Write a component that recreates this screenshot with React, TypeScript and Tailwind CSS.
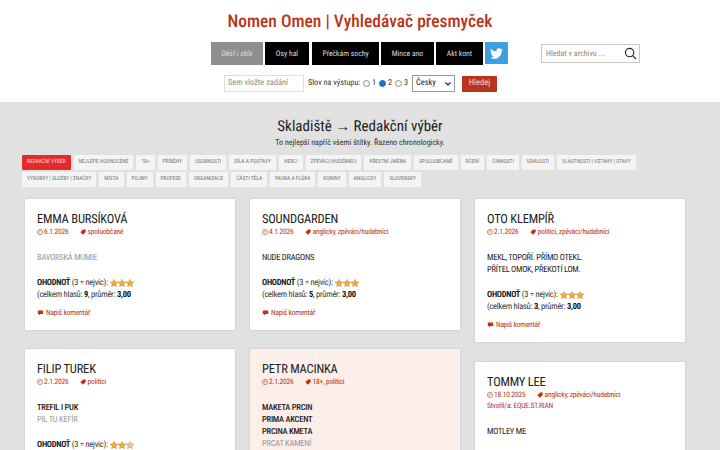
import React from "react";

const rc = "font-['Roboto_Condensed','Liberation_Sans_Narrow',Roboto,sans-serif] [font-stretch:75%] [text-rendering:geometricPrecision]";

function Stars({ half = false }: { half?: boolean }) {
  const s = "M5 0.2l1.5 3.2 3.5.4-2.6 2.4.7 3.5L5 8 1.9 9.7l.7-3.5L0 3.8l3.5-.4z";
  return (
    <span className="inline-flex align-[-1.5px] ml-[2px]">
      {[0, 1, 2].map((i) => (
        <svg key={i} width="8" height="8" viewBox="0 0 10 10" className="w-[8px] h-[8px]">
          <path d={s} fill={half && i === 2 ? "#d9c9a0" : "#f2a93b"} stroke="#b98a4a" strokeWidth="0.5" />
        </svg>
      ))}
    </span>
  );
}

function Clock() {
  return (
    <svg width="6" height="6" viewBox="0 0 10 10" className="inline-block mr-[1px] align-[-0.5px]" fill="none" stroke="#b8341a" strokeWidth="1">
      <circle cx="5" cy="5" r="4.3" />
      <path d="M5 2.5V5.2L3 5.2" />
    </svg>
  );
}

function Tag() {
  return (
    <svg width="6" height="6" viewBox="0 0 10 10" className="inline-block mr-[2px] align-[-0.5px]" fill="#b8341a">
      <path d="M5 1h4.5v4.2L5 9.6.6 5.4z" />
    </svg>
  );
}

function Comment() {
  return (
    <svg width="7" height="6" viewBox="0 0 11 10" className="inline-block mr-[2px]" fill="#b8341a">
      <path d="M1 1h9v5.6H5.4L3 9V6.6H1z" />
    </svg>
  );
}

type Line = { t: string; muted?: boolean; strong?: boolean };

function Card({
  name,
  date,
  tags,
  author,
  lines,
  votes,
  pink,
  half,
}: {
  name: string;
  date: string;
  tags: string;
  author?: string;
  lines: Line[];
  votes: number;
  pink?: boolean;
  half?: boolean;
}) {
  return (
    <div className={`${pink ? "bg-[#fdeeea]" : "bg-white"} rounded-[1px] shadow-[0_0_2px_rgba(0,0,0,0.18)] pl-[12px] pr-3 pt-[13px] pb-[12px] text-[#222]`}>
      <div className={`text-[12.5px] leading-[15px] tracking-[-0.2px] text-[#222] ${rc}`}>{name}</div>
      <div className={`text-[7.5px] leading-[10px] tracking-[-0.2px] text-[#b8341a] whitespace-nowrap ${rc}`}>
        <span className="mr-[11px]"><Clock />{date}</span>
        <span><Tag />{tags}</span>
      </div>
      {author && <div className={`text-[7.5px] leading-[11px] tracking-[-0.2px] text-[#b8341a] ${rc}`}>Stvořil/a: {author}</div>}
      <div className={`mt-[15px] text-[8.5px] leading-[12px] tracking-[-0.25px] ${rc}`}>
        {lines.map((l) => (
          <div key={l.t} className={l.muted ? "text-[#999]" : l.strong ? "text-[#222] font-medium" : "text-[#222]"}>{l.t}</div>
        ))}
      </div>
      <div className={`mt-[13px] text-[8.5px] leading-[12px] tracking-[-0.25px] ${rc}`}>
        <div><b className="font-bold">OHODNOŤ</b> <span className="text-[#333]">(3 = nejvíc):</span><Stars half={half} /></div>
        <div className="text-[#333]">(celkem hlasů: <b className="font-bold text-[#111]">{votes}</b>, průměr: <b className="font-bold text-[#111]">3,00</b></div>
      </div>
      <div className={`mt-[7px] text-[7.5px] leading-[10px] tracking-[-0.2px] text-[#b8341a] ${rc}`}><Comment />Napiš komentář</div>
    </div>
  );
}

const nav = [
  ["Osy hal", "w-[44px] mr-[3px]"],
  ["Přečkám sochy", "w-[67px] mr-[2px]"],
  ["Mince ano", "w-[53px] mr-[2px]"],
  ["Akt kont", "w-[47px] mr-[2px]"],
];

const tags1 = ["NEJLÉPE HODNOCENÉ", "18+", "PŘÍBĚHY", "OSOBNOSTI", "DÍLA A POSTAVY", "HERCI", "ZPĚVÁCI/HUDEBNÍCI", "KŘESTNÍ JMÉNA", "SPOLUOBČANÉ", "RČENÍ", "ČINNOSTI", "UDÁLOSTI", "VLASTNOSTI | VZTAHY | STAVY"];
const tags2 = ["VÝROBKY | SLUŽBY | ZNAČKY", "MÍSTA", "POJMY", "PROFESE", "ORGANIZACE", "ČÁSTI TĚLA", "FAUNA A FLÓRA", "KONINY", "ANGLICKY", "SLOVENSKY"];

function Chip({ t, active }: { t: string; active?: boolean }) {
  return (
    <span className={`h-[15px] px-[5px] flex items-center text-[5.5px] rounded-[1px] whitespace-nowrap ${rc} ${active ? "bg-[#e32b2b] text-[#f6d8d0]" : "bg-[#f4f4f4] text-[#777]"}`}>{t}</span>
  );
}

export default function App() {
  return (
    <div className={`w-[720px] h-[450px] overflow-hidden bg-[#e1e1e1] ${rc}`}>
      <header className="bg-white h-[102px] relative">
        <h1 className="pt-[10px] text-center text-[17.5px] leading-[24px] font-medium text-[#b8341a]">Nomen Omen | Vyhledávač přesmyček</h1>
        <div className="mt-[8px] pl-[211px] flex items-start h-[23px]">
          <div className="w-[52px] h-[23px] mr-[2px] bg-[#8e8e8e] text-[#ddd] italic text-[7.7px] flex items-center justify-center">Děšť i skla</div>
          {nav.map(([t, w]) => (
            <div key={t} className={`${w} h-[23px] bg-black text-[#ddd] text-[7.7px] flex items-center justify-center`}>{t}</div>
          ))}
          <div className="w-[23px] h-[22px] bg-[#3b9fe0] flex items-center justify-center">
            <svg width="15" height="13" viewBox="0 0 24 24" fill="#fff"><path d="M23.95 4.57a10 10 0 0 1-2.82.77 4.96 4.96 0 0 0 2.16-2.72 9.9 9.9 0 0 1-3.12 1.18 4.92 4.92 0 0 0-8.38 4.48A13.98 13.98 0 0 1 1.64 3.16a4.92 4.92 0 0 0 1.52 6.57 4.9 4.9 0 0 1-2.23-.62v.06a4.92 4.92 0 0 0 3.95 4.83 5 5 0 0 1-2.22.08 4.93 4.93 0 0 0 4.6 3.42A9.87 9.87 0 0 1 0 19.54a14 14 0 0 0 7.56 2.21c9.05 0 14-7.5 14-13.98l-.02-.64a9.9 9.9 0 0 0 2.41-2.56z" /></svg>
          </div>
          <div className="ml-[33px] mt-[2px] w-[99px] h-[19px] border border-[#c9c9bd] flex items-center justify-between pl-[4px] pr-[2px] text-[8px] text-[#888]">
            <span>Hledat v archivu ...</span>
            <svg width="13" height="13" viewBox="0 0 13 13" fill="none" stroke="#222" strokeWidth="1.1"><circle cx="5.6" cy="5.6" r="4.2" /><path d="M8.6 8.6L12 12" /></svg>
          </div>
        </div>
        <div className="mt-[10px] pl-[224px] flex items-center h-[17px]">
          <div className="w-[80px] h-[17px] border border-[#ddd] flex items-center pl-[3px] text-[8.4px] text-[#888]">Sem vložte zadání</div>
          <span className="ml-[4px] w-[52px] text-[8.2px] text-[#333] whitespace-nowrap">Slov na výstupu:</span>
          <span className="ml-[3px] w-[7px] h-[7px] rounded-full border border-[#888]" />
          <span className="ml-[2px] w-[7px] text-[8.2px] text-[#333]">1</span>
          <span className="w-[7px] h-[7px] rounded-full bg-[#1f6fd0] border border-[#1f6fd0]" />
          <span className="ml-[2px] w-[7px] text-[8.2px] text-[#333]">2</span>
          <span className="w-[7px] h-[7px] rounded-full border border-[#888]" />
          <span className="ml-[2px] w-[7px] text-[8.2px] text-[#333]">3</span>
          <div className="ml-[1px] w-[43px] h-[17px] border border-[#999] flex items-center justify-between px-[3px] text-[8.4px] text-[#222]">
            <span>Česky</span>
            <svg width="6" height="4" viewBox="0 0 6 4" fill="none" stroke="#222" strokeWidth="1.2"><path d="M.5.5L3 3l2.5-2.5" /></svg>
          </div>
          <div className="ml-[7px] w-[35px] h-[16px] bg-[#b8341a] rounded-[1px] text-[#f3d8cf] text-[8.5px] flex items-center justify-center">Hledej</div>
        </div>
      </header>

      <div className="pt-[14px] text-center text-[15px] leading-[20px] text-[#222]">Skladiště → Redakční výběr</div>
      <div className="mt-[1px] text-center text-[8px] leading-[12px] text-[#333]">To nejlepší napříč všemi štítky. Řazeno chronologicky.</div>

      <div className="mt-[6px] pl-[22px] flex gap-[3px]">
        <Chip t="REDAKČNÍ VÝBĚR" active />
        {tags1.map((t) => <Chip key={t} t={t} />)}
      </div>
      <div className="mt-[2px] pl-[22px] flex gap-[3px]">
        {tags2.map((t) => <Chip key={t} t={t} />)}
      </div>

      <div className="mt-[12px] pl-[25px] flex gap-[15px] items-start">
        <div className="w-[210px] flex flex-col gap-[19px]">
          <Card name="EMMA BURSÍKOVÁ" date="6.1.2026" tags="spoluobčané" lines={[{ t: "BAVORSKÁ MUMIE", muted: true }]} votes={9} />
          <Card name="FILIP TUREK" date="2.1.2026" tags="politici" lines={[{ t: "TREFIL I PUK", strong: true }, { t: "PIL TU KEFÍR", muted: true }]} votes={7} half />
        </div>
        <div className="w-[210px] flex flex-col gap-[19px]">
          <Card name="SOUNDGARDEN" date="4.1.2026" tags="anglicky, zpěváci/hudebníci" lines={[{ t: "NUDE DRAGONS" }]} votes={5} />
          <Card name="PETR MACINKA" date="2.1.2026" tags="18+, politici" lines={[{ t: "MAKETA PRCIN", strong: true }, { t: "PRIMA AKCENT", strong: true }, { t: "PRCINA KMETA", strong: true }, { t: "PRCAT KAMENÍ", muted: true }]} votes={6} pink />
        </div>
        <div className="w-[210px] flex flex-col gap-[20px]">
          <Card name="OTO KLEMPÍŘ" date="2.1.2026" tags="politici, zpěváci/hudebníci" lines={[{ t: "MEKL, TOPOŘÍ. PŘÍMO OTEKL." }, { t: "PŘÍTEL OMOK, PŘEKOTÍ LOM." }]} votes={3} />
          <Card name="TOMMY LEE" date="18.10.2025" tags="anglicky, zpěváci/hudebníci" author="EQUE.ST.RIAN" lines={[{ t: "MOTLEY ME" }]} votes={4} />
        </div>
      </div>
    </div>
  );
}
